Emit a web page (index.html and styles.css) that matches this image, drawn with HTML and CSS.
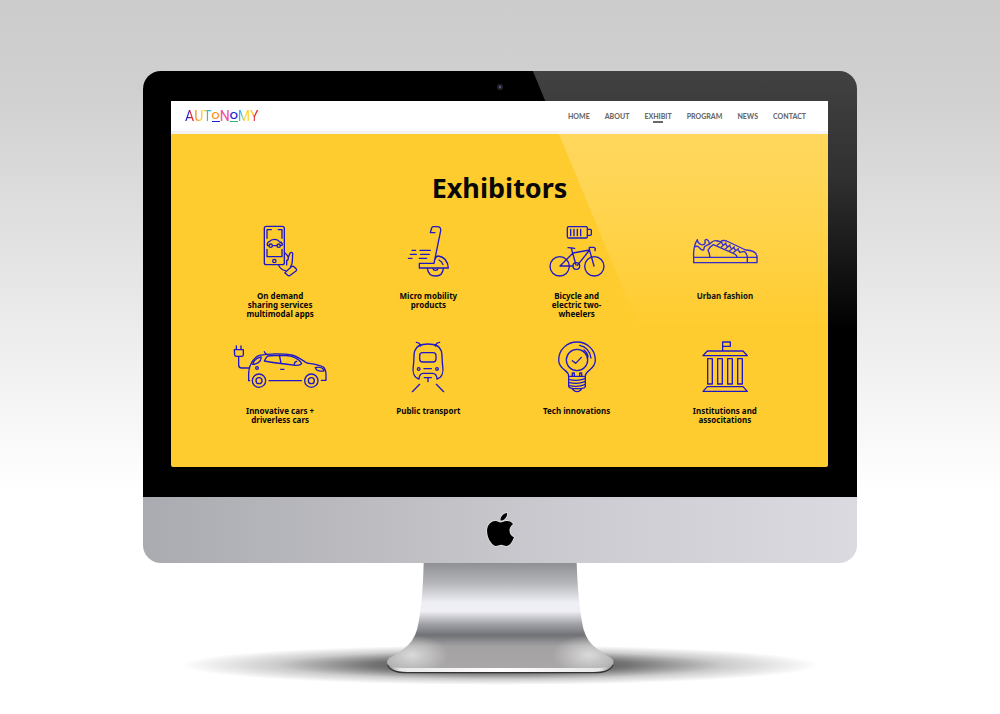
FILE: index.html
```html
<!DOCTYPE html>
<html lang="en">
<head>
<meta charset="utf-8">
<meta name="viewport" content="width=device-width, initial-scale=1">
<title>Autonomy – Exhibitors</title>
<link rel="stylesheet" href="styles.css">
</head>
<body>
<div class="monitor">
  <div class="bezel">
    <span class="camera"></span>
    <div class="screen">
      <header class="topbar">
        <a class="logo" href="#" aria-label="Autonomy"><span class="c-red">A</span><span class="c-orange">U</span><span class="c-cyan">T</span><span class="ring ring-orange">O</span><span class="c-pink">N</span><span class="ring ring-blue">O</span><span class="c-yellow">M</span><span class="c-red2">Y</span></a>
        <nav class="nav">
          <a href="#">HOME</a>
          <a href="#">ABOUT</a>
          <a href="#" class="active">EXHIBIT</a>
          <a href="#">PROGRAM</a>
          <a href="#">NEWS</a>
          <a href="#">CONTACT</a>
        </nav>
      </header>
      <main class="exhibitors">
        <h1>Exhibitors</h1>
        <ul class="grid">
          <li>
            <svg class="icon" viewBox="36 30 288 162" aria-hidden="true">
              <path d="M193 115V40q0-6-6-6h-48q-6 0-6 6v103q0 6 6 6h48q6 0 6-6z"/>
              <path d="M141 70V44h13M175 44h11v26M141 103v22h45v-22"/>
              <circle cx="163" cy="138" r="5"/>
              <path d="M147 92h-4q-4-9 5-12 5-7 15-7 11 0 16 8 8 1 8 8 0 3-6 3M158 92h13"/>
              <circle cx="152" cy="92" r="5"/><circle cx="176" cy="92" r="5"/>
              <path d="M194 113q10 8 11 15 0 8-5 8v14M205 127l5-13q6-4 8 1l-1 24q0 8-5 15M175 149q7 15 21 18"/>
              <path d="M196 172l20-18q3-2 6 1l7 7q2 3-1 6l-19 14q-3 2-6-1l-7-6q-3-2 0-3z"/>
            </svg>
            <span>On demand<br>sharing services<br>multimodal apps</span>
          </li>
          <li>
            <svg class="icon" viewBox="1 30 288 162" aria-hidden="true">
              <path d="M163 145l20-98q1-12-10-12h-12q-4 0-5 4l-4 14h14M119 145h44q3-22 13-22 27 4 30 36h-87z"/>
              <path d="M143 160q3 23 25 23 21 0 23-23M160 161q1 5 7 5 7 0 8-5M178 135q9 4 12 14"/>
              <path d="M97 106h11M121 106h31M92 118h18M123 118h26M86 130h11M119 130h22"/>
            </svg>
            <span>Micro mobility<br>products</span>
          </li>
          <li>
            <svg class="icon" viewBox="-3 30 288 162" aria-hidden="true">
              <rect x="112" y="35" width="60" height="34" rx="4"/><path d="M173 43h8q3 0 3 3v12q0 3-3 3h-8M122 43v19M132 43v19M142 43v19M152 43v19"/>
              <circle cx="89" cy="154" r="29"/><circle cx="193" cy="154" r="29"/><circle cx="139" cy="153" r="10"/>
              <path d="M114 98q10 0 20 2M124 100l14 50M90 153l39-39 50-9-37 46M90 153h39M192 153l-14-50v-6h13q7 2 4 10"/>
            </svg>
            <span>Bicycle and<br>electric two-<br>wheelers</span>
          </li>
          <li>
            <svg class="icon" viewBox="-9 30 288 162" aria-hidden="true">
              <path d="M41 127h190v16H41zM41 127q-2-32 11-53 1 11 12 15 9 2 12-6-4-9 4-10 7 3 8 12M44 96q9-5 14 2 12 12 14 4-1-8 8-11 10-3 16-10 7-6 16-3M89 126q1-10-5-20 5-10 16-17l60 26q11 4 11 12"/>
              <path d="M112 78l10 2q6-6 18-2l57 27q34 1 34 22M202 142v-15q-1-11-9-18l-14 3"/>
              <path d="M112 90l12-9M124 96l14-12M137 101l13-11M149 107l14-11M161 112l14-11M124 81l4 7M136 86l5 7M148 91l5 8M160 97l6 8M173 103l6 8"/>
            </svg>
            <span>Urban fashion</span>
          </li>
          <li>
            <svg class="icon" viewBox="21 15 288 162" aria-hidden="true">
              <path d="M28 44h27v15q0 5-5 5H34q-5 0-5-5zM34 43V33M48 43V33M41 65v25q0 9 9 9h24"/>
              <circle cx="102" cy="137" r="20"/><circle cx="102" cy="137" r="9"/><circle cx="259" cy="137" r="20"/><circle cx="259" cy="137" r="9"/>
              <path d="M132 137h97M74 137h-3v-24C71 92 86 67 103 61 130 56 175 55 200 60 220 65 232 76 246 84 266 87 284 89 295 96 301 102 303 112 303 119v17h-14M118 50q1 6 8 8"/>
              <path d="M128 63q-6 6-10 15 40 7 94 13 14 1 18-5-5-13-30-22-30-6-72-1zM163 60l5 24M208 88q0-8 7-9M83 88q4-17 25-22 2 10-8 17-8 5-17 5zM271 98q17-5 25 6l1 4q-23 3-26-10zM167 103h10"/>
              <circle cx="96" cy="99" r="4"/>
            </svg>
            <span>Innovative cars +<br>driverless cars</span>
          </li>
          <li>
            <svg class="icon" viewBox="-13 15 288 162" aria-hidden="true">
              <path d="M104 132C88 128 84 110 87 92 90 75 87 62 91 48 95 33 109 27 131 27s36 6 40 21c4 14 1 27 4 44 3 18-1 36-17 40-1-12-6-17-13-17h-28c-7 0-12 5-13 17zM96 22q11 1 13 11M166 22q-11 1-13 11"/>
              <rect x="106" y="53" width="49" height="28" rx="9"/>
              <circle cx="103" cy="102" r="4"/><circle cx="158" cy="102" r="4"/>
              <path d="M119 101h22M120 128h21M131 128v12M106 148l-22 22M156 148l22 22"/>
            </svg>
            <span>Public transport</span>
          </li>
          <li>
            <svg class="icon" viewBox="-18 15 288 162" aria-hidden="true">
              <path d="M101 124c0-8-4-13-11-18C79 98 71 88 71 75c0-31 25-54 55-54s55 23 55 54c0 13-8 23-18 31-7 5-12 10-12 18zM101 124v31q3 5 11 5 4 10 14 10t14-10q9 0 11-5v-31"/>
              <circle cx="126" cy="75" r="32"/><path d="M112 77l10 8 17-18M134 31q29 6 34 38M147 45q10 7 12 21M112 123v-9h6v9M134 123v-9h6v9M104 134q25 5 46-3M104 143q25 5 46-3M104 152q25 5 46-3M112 161h28"/>
            </svg>
            <span>Tech innovations</span>
          </li>
          <li>
            <svg class="icon" viewBox="-9 15 288 162" aria-hidden="true">
              <path d="M128 47V21h23v13h-22M82 48h107l13 14H69zM82 155h107l13 14H69zM83 71h14v76H83zM113 71h14v76h-14zM143 71h14v76h-14zM173 71h14v76h-14z"/>
            </svg>
            <span>Institutions and<br>associtations</span>
          </li>
        </ul>
      </main>
    </div>
    <div class="glare"></div>
  </div>
  <div class="chin">
    <svg class="apple" viewBox="0 0 24 24" aria-hidden="true"><path d="M12.152 6.896c-.948 0-2.415-1.078-3.96-1.04-2.04.027-3.91 1.183-4.961 3.014-2.117 3.675-.546 9.103 1.519 12.09 1.013 1.454 2.208 3.09 3.792 3.039 1.52-.065 2.09-.987 3.935-.987 1.831 0 2.35.987 3.96.948 1.637-.026 2.676-1.48 3.676-2.948 1.156-1.688 1.636-3.325 1.662-3.415-.039-.013-3.182-1.221-3.22-4.857-.026-3.04 2.48-4.494 2.597-4.559-1.429-2.09-3.623-2.324-4.39-2.376-2-.156-3.675 1.09-4.61 1.09zM15.53 3.83c.843-1.012 1.4-2.427 1.245-3.83-1.207.052-2.662.805-3.532 1.818-.78.896-1.454 2.338-1.273 3.714 1.338.104 2.715-.688 3.559-1.701"/></svg>
  </div>
</div>
<svg class="stand" viewBox="-570 219 1920 372" aria-hidden="true">
  <defs>
    <linearGradient id="metal" x1="0" y1="219" x2="0" y2="547" gradientUnits="userSpaceOnUse">
      <stop offset="0" stop-color="#8f9094"/>
      <stop offset=".18" stop-color="#b4b5b9"/>
      <stop offset=".36" stop-color="#eeeef5"/>
      <stop offset=".44" stop-color="#efeff5"/>
      <stop offset=".56" stop-color="#a0a1a6"/>
      <stop offset=".66" stop-color="#717277"/>
      <stop offset=".76" stop-color="#a3a1a2"/>
      <stop offset="1" stop-color="#aaa8a8"/>
    </linearGradient>
    <radialGradient id="shade">
      <stop offset="0" stop-color="#000" stop-opacity=".8"/>
      <stop offset=".4" stop-color="#000" stop-opacity=".55"/>
      <stop offset=".7" stop-color="#000" stop-opacity=".2"/>
      <stop offset="1" stop-color="#000" stop-opacity="0"/>
    </radialGradient>
    <radialGradient id="shine">
      <stop offset="0" stop-color="#fff" stop-opacity=".6"/>
      <stop offset="1" stop-color="#fff" stop-opacity="0"/>
    </radialGradient>
    <linearGradient id="rim" x1="50" y1="0" x2="731" y2="0" gradientUnits="userSpaceOnUse">
      <stop offset="0" stop-color="#888"/>
      <stop offset=".06" stop-color="#e8e8e8"/>
      <stop offset=".5" stop-color="#fff"/>
      <stop offset=".94" stop-color="#e8e8e8"/>
      <stop offset="1" stop-color="#888"/>
    </linearGradient>
    <clipPath id="foot"><path d="M161 219H620Q624 330 636 395 642 440 668 466 690 486 724 504 731 509 731 518 725 534 670 534H112Q56 534 51 518 51 509 58 504 92 486 114 466 140 440 146 395 158 330 161 219z"/></clipPath>
  </defs>
  <ellipse cx="391" cy="525" rx="960" ry="60" fill="url(#shade)"/>
  <path d="M51 524Q60 550 112 550H670Q722 550 731 524z" fill="#333"/>
  <path d="M51 514Q54 546 112 546H670Q728 546 731 514z" fill="url(#rim)"/>
  <g clip-path="url(#foot)">
    <path d="M40 219H740V540H40z" fill="url(#metal)"/>
    <ellipse cx="125" cy="495" rx="110" ry="60" fill="url(#shine)"/>
    <ellipse cx="657" cy="495" rx="110" ry="60" fill="url(#shine)"/>
  </g>
</svg>
</body>
</html>
```
FILE: styles.css
```css
* {
  box-sizing: border-box;
}

body {
  margin: 0;
  padding: 71px 0 0;
  min-height: 100vh;
  background: linear-gradient(#cccccc 0, #d0d0d0 90px, #ffffff 490px);
  font-family: "Noto Sans", "Open Sans", sans-serif;
  color: #080808;
}

.monitor {
  width: 71.4%;
  min-width: 560px;
  margin: 0 auto;
  border-radius: 18px;
  overflow: hidden;
}

.bezel {
  position: relative;
  padding: 30px 29px 30px 28px;
  background: #000;
}

.camera {
  position: absolute;
  top: 13px;
  left: 50%;
  width: 6px;
  height: 6px;
  margin-left: -3px;
  border: 2px solid #25252f;
  border-radius: 50%;
  background: #6a62a8;
}

.glare {
  position: absolute;
  inset: 0;
  background: linear-gradient(rgba(255, 255, 255, 0.26) 0, rgba(255, 255, 255, 0.19) 25%, rgba(255, 255, 255, 0) 61%);
  clip-path: polygon(54.6% 0, 100% 0, 100% 61%, 69.7% 61%);
  pointer-events: none;
}

.screen {
  background: #ffcc2f;
  border-radius: 0 0 2px 2px;
  overflow: hidden;
}

.topbar {
  display: flex;
  align-items: center;
  justify-content: space-between;
  height: 33px;
  padding: 0 22px 0 14px;
  background: #fff;
  border-bottom: 3px solid #f2f2f2;
}

.logo {
  display: flex;
  align-items: flex-start;
  font: 14px/16px Roboto, sans-serif;
  text-decoration: none;
}

.c-red { background: linear-gradient(90deg, #1d1dd0 45%, #e8202a 55%); background-clip: text; color: transparent; }
.c-orange { background: linear-gradient(90deg, #f58a1f 45%, #ffc91f 65%); background-clip: text; color: transparent; }
.c-cyan { background: linear-gradient(90deg, #ffc91f 30%, #2fb9ea 50%); background-clip: text; color: transparent; }
.c-pink { color: #ee4f9b; }
.c-yellow { background: linear-gradient(90deg, #2fb9ea 30%, #ffd21f 50%); background-clip: text; color: transparent; }
.c-red2 { background: linear-gradient(90deg, #ffc91f 40%, #e8202a 55%); background-clip: text; color: transparent; }

.ring {
  margin-top: 2px;
  font: bold 10px/11px Lato, sans-serif;
  border-bottom: 1px solid;
}

.ring-orange { color: #f7941e; border-color: #1d1dd0; }
.ring-blue { color: #1d1dd0; border-color: #35b56a; }

.nav {
  display: flex;
  gap: 15px;
  font: 900 7px/10px Lato, sans-serif;
}

.nav a {
  position: relative;
  color: #3d3d3f;
  text-decoration: none;
}

.nav .active::after {
  content: "";
  position: absolute;
  top: 10px;
  left: 50%;
  width: 10px;
  height: 2px;
  margin-left: -5px;
  background: #3d3d3f;
}

.exhibitors {
  padding: 36px 29px 43px 35px;
}

h1 {
  margin: 0 6px 19px 0;
  font-size: 27px;
  line-height: 36px;
  font-weight: 700;
  text-align: center;
}

.grid {
  display: grid;
  grid-template-columns: repeat(4, 1fr);
  row-gap: 22px;
  margin: 0;
  padding: 0;
  list-style: none;
}

.grid li {
  display: flex;
  flex-direction: column;
  align-items: center;
  gap: 12px;
  font-size: 8px;
  line-height: 9px;
  font-weight: 700;
  text-align: center;
}

.icon {
  width: 96px;
  height: 54px;
  fill: none;
  stroke: #1f16c8;
  stroke-width: 4;
  stroke-linecap: round;
  stroke-linejoin: round;
}

.chin {
  display: flex;
  justify-content: center;
  padding: 16px 0 17px;
  background: linear-gradient(90deg, #aaabb0, #c3c3c8 45%, #cccbd1 60%, #dbdae1);
}

.apple {
  width: 33px;
  height: 33px;
  overflow: visible;
  stroke: #e8e8ec;
  stroke-width: 1;
  paint-order: stroke;
}

.stand {
  display: block;
  width: 640px;
  max-width: 100%;
  margin: 0 auto;
}
```
